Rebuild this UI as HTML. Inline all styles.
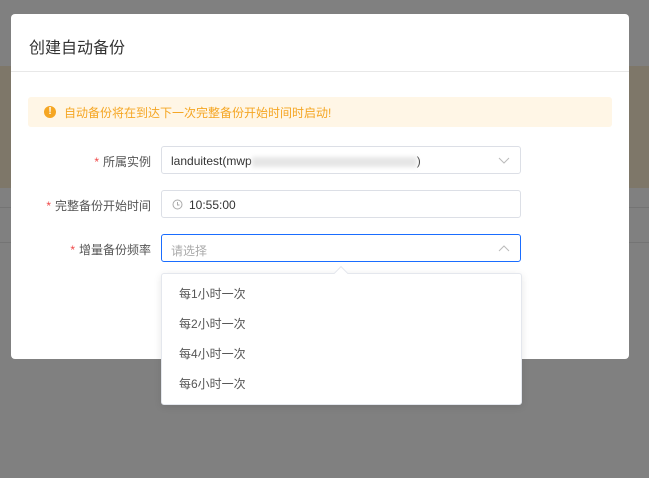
<!DOCTYPE html>
<html><head><meta charset="utf-8"><style>
*{margin:0;padding:0;box-sizing:border-box}
body{width:649px;height:478px;background:#808080;position:relative;overflow:hidden;font-family:"Liberation Sans","Noto Sans CJK SC",sans-serif}
.bgo{position:absolute;top:66px;height:122px;background:#7e7769}
.bgline{position:absolute;left:0;width:649px;height:1px;background:#747474}
.modal{position:absolute;left:11px;top:14px;width:618px;height:345px;background:#fff;border-radius:4px}
.title{position:absolute;left:18px;top:20px;font-size:16px;color:#333}
.hd{position:absolute;left:0;top:57px;width:618px;height:1px;background:#e8e8e8}
.alert{position:absolute;left:17px;top:83px;width:584px;height:30px;background:#fff6e6;border-radius:3px}
.alert .ic{position:absolute;left:16px;top:9px;width:12px;height:12px;border-radius:50%;background:#f5a623;color:#fff;font-size:10px;font-weight:bold;text-align:center;line-height:12px}
.alert .t{position:absolute;left:36px;top:7px;font-size:12px;color:#f5a623}
.lab{position:absolute;right:478px;font-size:12px;color:#555;white-space:nowrap}
.lab b{color:#f04848;font-weight:normal;margin-right:4px}
.inp{position:absolute;left:150px;width:360px;height:28px;border:1px solid #dcdfe6;border-radius:3px;font-size:12px;color:#333}
.dd{position:absolute;left:161px;top:273px;width:361px;height:132px;background:#fff;border:1px solid #e4e7ed;border-radius:3px;box-shadow:0 2px 8px rgba(0,0,0,.1)}
.dd div{position:absolute;left:17px;font-size:12px;color:#555}
.arr{position:absolute;left:336px;top:268px;width:10px;height:10px;background:#fff;transform:rotate(45deg);border-left:1px solid #e4e7ed;border-top:1px solid #e4e7ed}
</style></head><body>
<div class="bgo" style="left:0;width:11px"></div>
<div class="bgo" style="left:629px;width:20px"></div>
<div class="bgline" style="top:207px"></div>
<div class="bgline" style="top:242px"></div>
<div class="modal">
<div class="title">创建自动备份</div>
<div class="hd"></div>
<div class="alert"><div class="ic">!</div><div class="t">自动备份将在到达下一次完整备份开始时间时启动!</div></div>
<div class="lab" style="top:139px"><b>*</b>所属实例</div>
<div class="inp" style="top:132px"><span style="position:absolute;left:9px;top:7px">landuitest(mwp<span style="display:inline-block;width:165px;height:10px;background:#e6e6e6;filter:blur(2px);vertical-align:middle"></span>)</span>
<svg style="position:absolute;right:10px;top:10px" width="12" height="8"><path d="M1 1L6 6L11 1" fill="none" stroke="#bbb"/></svg></div>
<div class="lab" style="top:183px"><b>*</b>完整备份开始时间</div>
<div class="inp" style="top:176px"><svg style="position:absolute;left:10px;top:8px" width="11" height="11"><circle cx="5.5" cy="5.5" r="4.5" fill="none" stroke="#aaa"/><path d="M5.5 3v3h2" fill="none" stroke="#aaa"/></svg><span style="position:absolute;left:27px;top:7px;color:#333">10:55:00</span></div>
<div class="lab" style="top:227px"><b>*</b>增量备份频率</div>
<div class="inp" style="top:220px;border-color:#1a6dff"><span style="position:absolute;left:9px;top:7px;color:#aaa">请选择</span>
<svg style="position:absolute;right:10px;top:10px" width="12" height="8"><path d="M1 6L6 1L11 6" fill="none" stroke="#bbb"/></svg></div>
</div>
<div class="dd">
<div style="top:11px">每1小时一次</div>
<div style="top:41px">每2小时一次</div>
<div style="top:71px">每4小时一次</div>
<div style="top:101px">每6小时一次</div>
</div>
<div class="arr"></div>
</body></html>
